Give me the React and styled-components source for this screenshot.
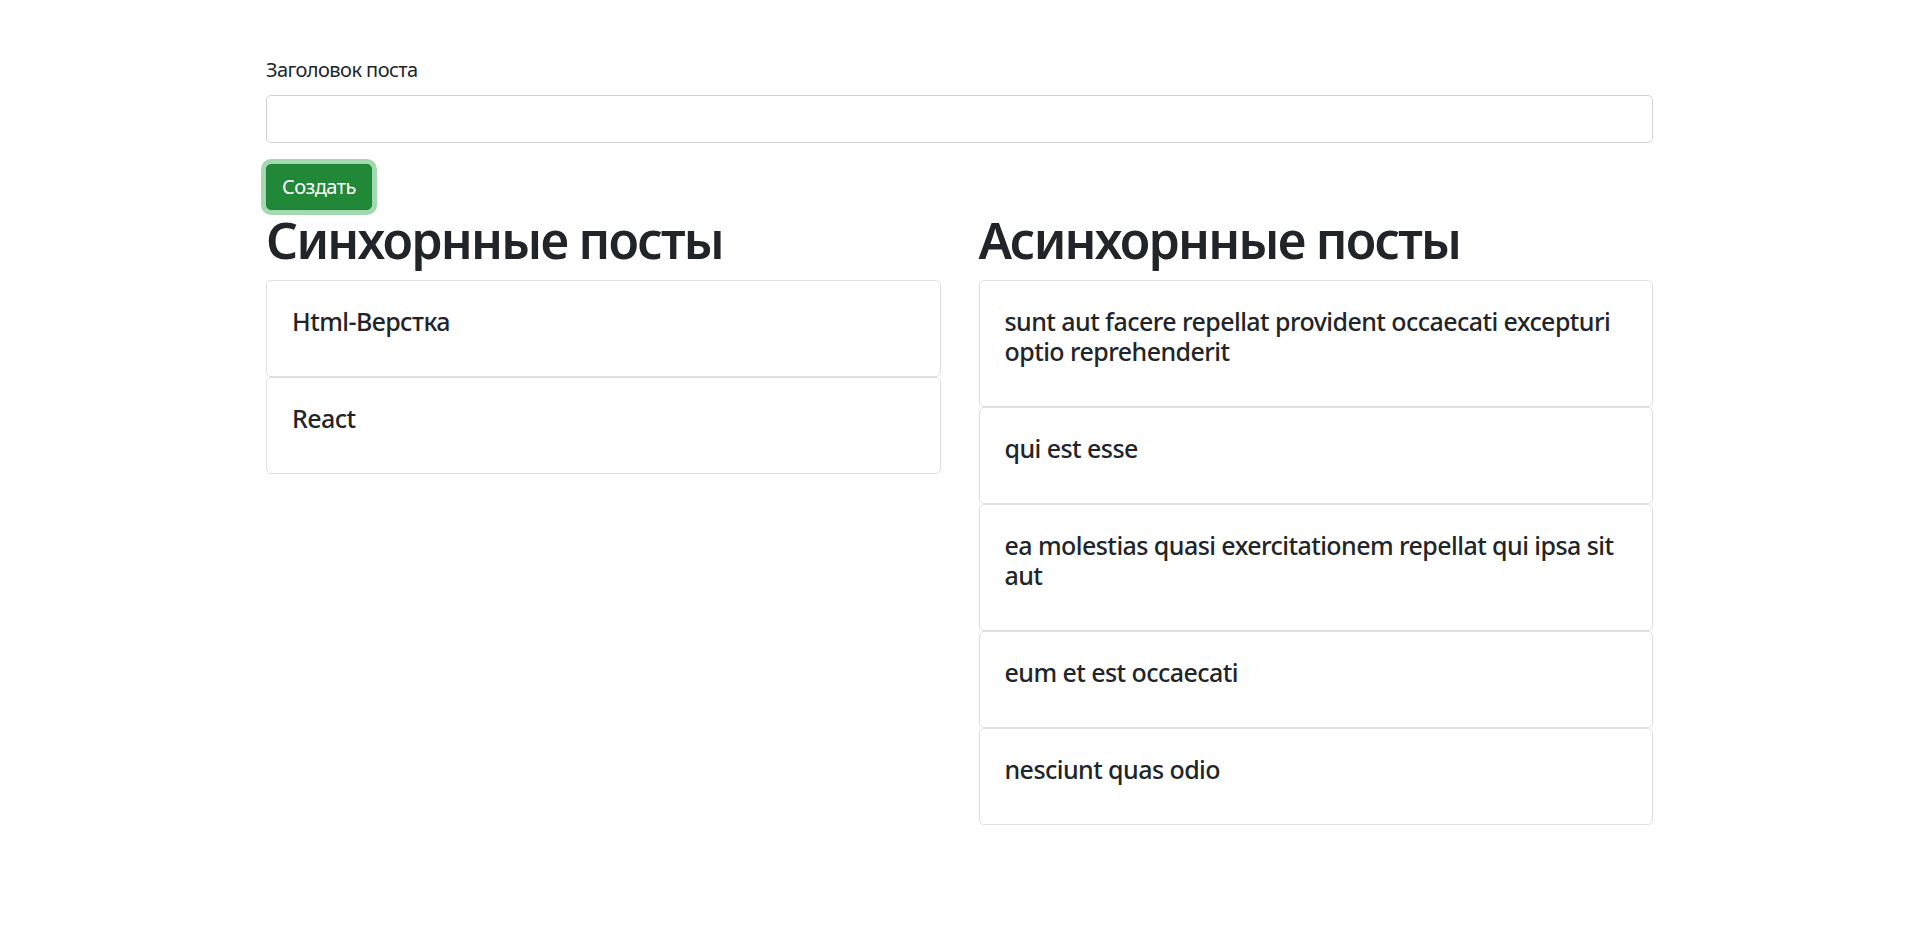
import React, { useState } from "react"
import styled, { createGlobalStyle } from "styled-components"

const GlobalStyle = createGlobalStyle`
  * { box-sizing: border-box; }
  body {
    margin: 0;
    background: #fff;
    color: #212529;
    font-family: "Noto Sans", "Open Sans", sans-serif;
    font-size: 20px;
    line-height: 1.5;
    letter-spacing: -0.028em;
  }
`

const syncPosts = [
  { id: 1, title: "Html-Верстка" },
  { id: 2, title: "React" },
]

const asyncPosts = [
  { id: 1, title: "sunt aut facere repellat provident occaecati excepturi optio reprehenderit" },
  { id: 2, title: "qui est esse" },
  { id: 3, title: "ea molestias quasi exercitationem repellat qui ipsa sit aut" },
  { id: 4, title: "eum et est occaecati" },
  { id: 5, title: "nesciunt quas odio" },
]

function PostList({ title, posts }) {
  return (
    <Column>
      <Heading>{title}</Heading>
      {posts.map(p => (
        <Card key={p.id}>
          <CardTitle>{p.title}</CardTitle>
        </Card>
      ))}
    </Column>
  )
}

function App() {
  const [value, setValue] = useState("")
  return (
    <Container>
      <GlobalStyle />
      <form onSubmit={e => e.preventDefault()}>
        <FormGroup>
          <Label htmlFor="title">Заголовок поста</Label>
          <Input id="title" type="text" value={value} onChange={e => setValue(e.target.value)} />
        </FormGroup>
        <Button type="submit">Создать</Button>
      </form>
      <Row>
        <PostList title="Синхорнные посты" posts={syncPosts} />
        <PostList title="Асинхорнные посты" posts={asyncPosts} />
      </Row>
    </Container>
  )
}

export default App

const Container = styled.div`
  width: 1425px;
  margin: 0 0 0 247px;
  padding: 55px 19px 40px;
`

const FormGroup = styled.div`
  margin-bottom: 21px;
`

const Label = styled.label`
  display: inline-block;
  margin-bottom: 10px;
`

const Input = styled.input`
  display: block;
  width: 100%;
  height: 48px;
  padding: 7px 15px;
  font: inherit;
  color: #495057;
  border: 1px solid #ced4da;
  border-radius: 5px;
  outline: none;
`

const Button = styled.button`
  display: inline-block;
  font: inherit;
  letter-spacing: inherit;
  line-height: 1.5;
  padding: 7px 15px;
  color: #fff;
  background: #218838;
  border: 1px solid #1e7e34;
  border-radius: 5px;
  box-shadow: 0 0 0 5px rgba(72, 180, 97, 0.5);
  cursor: pointer;
`

const Row = styled.div`
  display: grid;
  grid-template-columns: 1fr 1fr;
  column-gap: 38px;
`

const Column = styled.div`
  min-width: 0;
`

const Heading = styled.h1`
  margin: 0 0 10px;
  font-size: 50px;
  font-weight: 600;
  line-height: 1.2;
  letter-spacing: -0.035em;
`

const Card = styled.div`
  border: 1px solid rgba(0, 0, 0, 0.125);
  border-radius: 5px;
  padding: 25px;
`

const CardTitle = styled.h5`
  margin: 0 0 15px;
  font-size: 25px;
  font-weight: 500;
  line-height: 1.2;
`
